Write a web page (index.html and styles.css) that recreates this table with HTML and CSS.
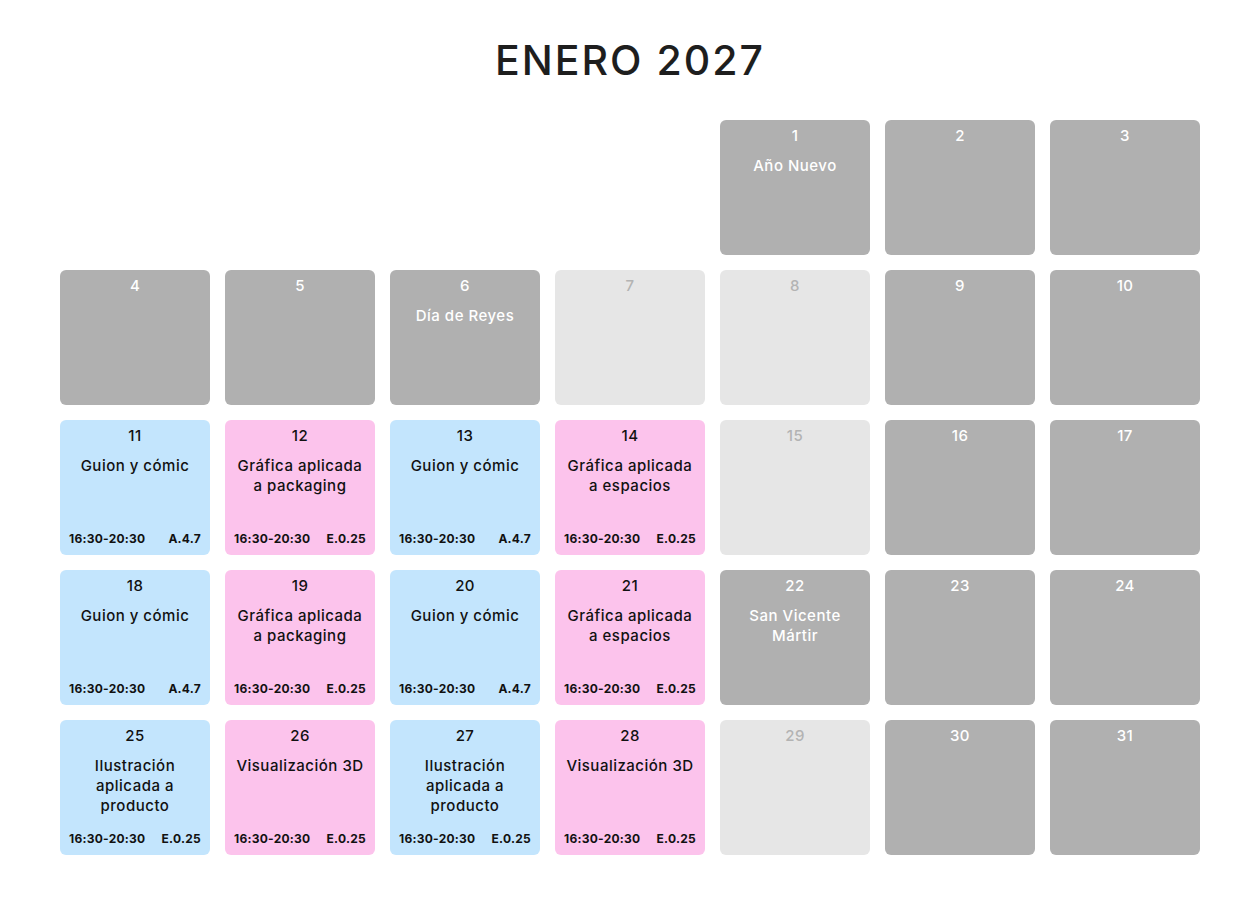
FILE: index.html
```html
<!DOCTYPE html>
<html lang="es">
<head>
<meta charset="utf-8">
<link rel="stylesheet" href="styles.css">
</head>
<body>
<main class="page">
  <h1 class="title">ENERO 2027</h1>
  <div class="grid">
    <div class="cell empty"></div>
    <div class="cell empty"></div>
    <div class="cell empty"></div>
    <div class="cell empty"></div>
    <div class="cell gray"><div class="num">1</div><div class="ev">Año Nuevo</div></div>
    <div class="cell gray"><div class="num">2</div></div>
    <div class="cell gray"><div class="num">3</div></div>

    <div class="cell gray"><div class="num">4</div></div>
    <div class="cell gray"><div class="num">5</div></div>
    <div class="cell gray"><div class="num">6</div><div class="ev">Día de Reyes</div></div>
    <div class="cell light"><div class="num">7</div></div>
    <div class="cell light"><div class="num">8</div></div>
    <div class="cell gray"><div class="num">9</div></div>
    <div class="cell gray"><div class="num">10</div></div>

    <div class="cell blue"><div class="num">11</div><div class="ev">Guion y cómic</div><div class="meta"><span>16:30-20:30</span><span>A.4.7</span></div></div>
    <div class="cell pink"><div class="num">12</div><div class="ev">Gráfica aplicada a packaging</div><div class="meta"><span>16:30-20:30</span><span>E.0.25</span></div></div>
    <div class="cell blue"><div class="num">13</div><div class="ev">Guion y cómic</div><div class="meta"><span>16:30-20:30</span><span>A.4.7</span></div></div>
    <div class="cell pink"><div class="num">14</div><div class="ev">Gráfica aplicada a espacios</div><div class="meta"><span>16:30-20:30</span><span>E.0.25</span></div></div>
    <div class="cell light"><div class="num">15</div></div>
    <div class="cell gray"><div class="num">16</div></div>
    <div class="cell gray"><div class="num">17</div></div>

    <div class="cell blue"><div class="num">18</div><div class="ev">Guion y cómic</div><div class="meta"><span>16:30-20:30</span><span>A.4.7</span></div></div>
    <div class="cell pink"><div class="num">19</div><div class="ev">Gráfica aplicada a packaging</div><div class="meta"><span>16:30-20:30</span><span>E.0.25</span></div></div>
    <div class="cell blue"><div class="num">20</div><div class="ev">Guion y cómic</div><div class="meta"><span>16:30-20:30</span><span>A.4.7</span></div></div>
    <div class="cell pink"><div class="num">21</div><div class="ev">Gráfica aplicada a espacios</div><div class="meta"><span>16:30-20:30</span><span>E.0.25</span></div></div>
    <div class="cell gray"><div class="num">22</div><div class="ev">San Vicente Mártir</div></div>
    <div class="cell gray"><div class="num">23</div></div>
    <div class="cell gray"><div class="num">24</div></div>

    <div class="cell blue"><div class="num">25</div><div class="ev">Ilustración aplicada a producto</div><div class="meta"><span>16:30-20:30</span><span>E.0.25</span></div></div>
    <div class="cell pink"><div class="num">26</div><div class="ev">Visualización 3D</div><div class="meta"><span>16:30-20:30</span><span>E.0.25</span></div></div>
    <div class="cell blue"><div class="num">27</div><div class="ev">Ilustración aplicada a producto</div><div class="meta"><span>16:30-20:30</span><span>E.0.25</span></div></div>
    <div class="cell pink"><div class="num">28</div><div class="ev">Visualización 3D</div><div class="meta"><span>16:30-20:30</span><span>E.0.25</span></div></div>
    <div class="cell light"><div class="num">29</div></div>
    <div class="cell gray"><div class="num">30</div></div>
    <div class="cell gray"><div class="num">31</div></div>
  </div>
</main>
</body>
</html>
```
FILE: styles.css
```css
* { box-sizing: border-box; }
html, body { margin: 0; padding: 0; background: #ffffff; }
body {
  font-family: Inter, "Noto Sans", "Liberation Sans", sans-serif;
  color: #1a1a1a;
}
.page {
  width: 1260px;
  padding: 0 60px;
}
.title {
  margin: 0;
  height: 120px;
  display: flex;
  align-items: center;
  justify-content: center;
  font-size: 41px;
  font-weight: 500;
  letter-spacing: 2px;
  color: #1e1e1e;
  padding-bottom: 1px;
}
.grid {
  display: grid;
  grid-template-columns: repeat(7, 150px);
  grid-auto-rows: 135px;
  gap: 15px;
}
.cell {
  border-radius: 6px;
  display: flex;
  flex-direction: column;
  align-items: stretch;
  padding: 6px 9px 8px;
  text-align: center;
}
.cell.empty { background: transparent; }
.gray { background: #b0b0b0; color: #ffffff; }
.light { background: #e6e6e6; color: #b3b3b3; }
.blue { background: #c3e5fd; color: #111111; }
.pink { background: #fcc3ec; color: #111111; }
.num {
  font-size: 15px;
  line-height: 20px;
  font-weight: 500;
  letter-spacing: 0.4px;
}
.ev {
  margin-top: 10px;
  font-size: 15px;
  line-height: 20px;
  font-weight: 500;
  letter-spacing: 0.5px;
}
.meta {
  margin-top: auto;
  display: flex;
  justify-content: space-between;
  font-size: 12px;
  line-height: 16px;
  font-weight: 700;
  letter-spacing: 0.25px;
}
```
